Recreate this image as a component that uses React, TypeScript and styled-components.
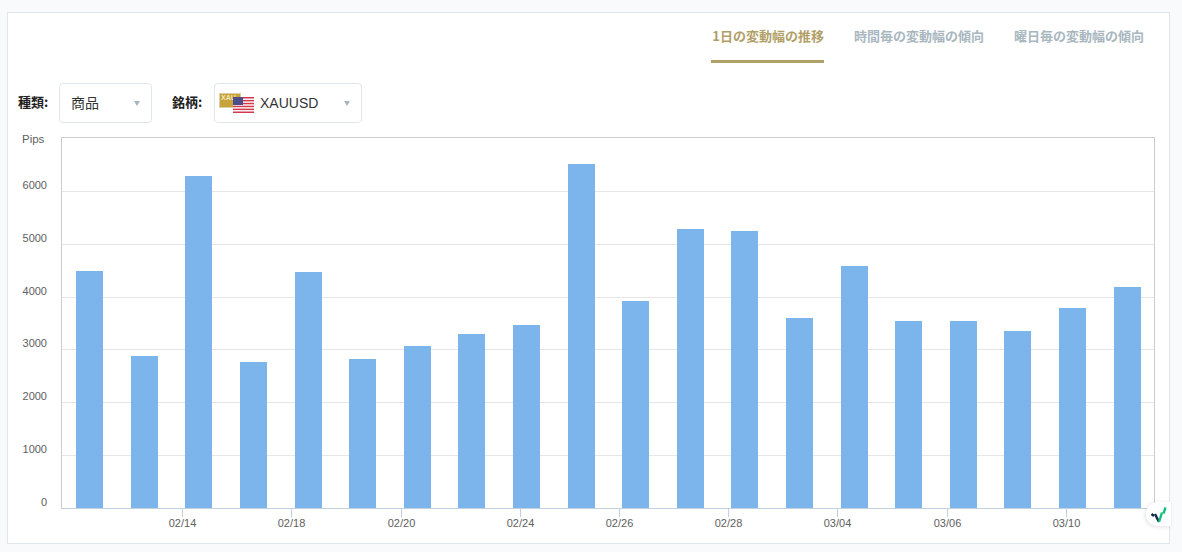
import React from "react";
import styled, { createGlobalStyle } from "styled-components";

const GlobalStyle = createGlobalStyle`
  html, body {
    margin: 0;
    padding: 0;
    background: #f9fafc;
    font-family: "Liberation Sans", "Noto Sans CJK JP", sans-serif;
  }
`;

const Page = styled.div`
  width: 1182px;
  height: 552px;
  padding: 12px 12px 8px 7px;
  box-sizing: border-box;
  overflow: hidden;
`;

const Card = styled.div`
  position: relative;
  height: 532px;
  box-sizing: border-box;
  background: #fff;
  border: 1px solid #dfe7ec;
`;

const Tabs = styled.div`
  display: flex;
  justify-content: flex-end;
  gap: 30px;
  height: 50px;
  padding-right: 25px;
`;

const Tab = styled.div<{ $active?: boolean }>`
  height: 50px;
  box-sizing: border-box;
  padding: 13px 0 0 ${(props) => (props.$active ? "1px" : "0")};
  font-size: 13px;
  line-height: 19px;
  font-weight: 700;
  font-family: "Noto Sans CJK JP", sans-serif;
  color: ${(props) => (props.$active ? "#b19f68" : "#a9b7c0")};
  border-bottom: 3px solid
    ${(props) => (props.$active ? "#b19f68" : "transparent")};
`;

const Filters = styled.div`
  display: flex;
  align-items: center;
  height: 40px;
  margin-top: 20px;
  padding-left: 10px;
`;

const FilterLabel = styled.div<{ $width: number }>`
  width: ${(props) => props.$width}px;
  font-size: 13px;
  font-weight: 700;
  color: #222;
  font-family: "Noto Sans CJK JP", sans-serif;
  margin-right: 10px;
  position: relative;
  top: -2px;
  white-space: nowrap;
`;

const Select = styled.div<{ $width: number }>`
  display: flex;
  align-items: center;
  width: ${(props) => props.$width}px;
  height: 40px;
  box-sizing: border-box;
  margin-right: 20px;
  padding: 0 11px;
  background: #fff;
  border: 1px solid #dfe7ec;
  border-radius: 4px;
  font-size: 14px;
  color: #333;
  font-family: "Liberation Sans", "Noto Sans CJK JP", sans-serif;
`;

const SelectValue = styled.span<{ $lift?: boolean }>`
  flex: 1;
  position: relative;
  top: ${(props) => (props.$lift ? "-1px" : "0")};
`;

const Caret = styled.span`
  width: 0;
  height: 0;
  border-left: 3.5px solid transparent;
  border-right: 3.5px solid transparent;
  border-top: 5px solid #a9b5bd;
`;

const FlagIcon = styled.svg`
  display: block;
  flex: none;
  margin: 0 5px 0 -7px;
`;

const ChartSvg = styled.svg`
  display: block;
  margin-top: 2px;
  font-family: "Liberation Sans", sans-serif;
  font-size: 11px;
  fill: #606060;
`;

const Badge = styled.div`
  position: absolute;
  right: -2px;
  top: 489px;
  width: 25px;
  height: 24px;
  display: flex;
  align-items: center;
  justify-content: center;
  background: #fff;
  border-radius: 12px 0 0 12px;
  box-shadow: -1px 1px 4px rgba(0, 0, 0, 0.12);
`;

const bars = [
  { x: 76, top: 271 },
  { x: 131, top: 356 },
  { x: 185, top: 176 },
  { x: 240, top: 362 },
  { x: 295, top: 272 },
  { x: 349, top: 359 },
  { x: 404, top: 346 },
  { x: 458, top: 334 },
  { x: 513, top: 325 },
  { x: 568, top: 164 },
  { x: 622, top: 301 },
  { x: 677, top: 229 },
  { x: 731, top: 231 },
  { x: 786, top: 318 },
  { x: 841, top: 266 },
  { x: 895, top: 321 },
  { x: 950, top: 321 },
  { x: 1004, top: 331 },
  { x: 1059, top: 308 },
  { x: 1114, top: 287 },
];
const yLabels = [
  { label: "6000", y: 191 },
  { label: "5000", y: 244 },
  { label: "4000", y: 297 },
  { label: "3000", y: 349 },
  { label: "2000", y: 402 },
  { label: "1000", y: 455 },
];
const xTicks = [
  { label: "02/14", x: 182 },
  { label: "02/18", x: 291 },
  { label: "02/20", x: 401 },
  { label: "02/24", x: 520 },
  { label: "02/26", x: 619 },
  { label: "02/28", x: 728 },
  { label: "03/04", x: 837 },
  { label: "03/06", x: 947 },
  { label: "03/10", x: 1066 },
];

// page coordinates of the chart's top-left corner
const OX = 8;
const OY = 125;

const Flags = () => (
  <FlagIcon width="36" height="21" viewBox="0 0 36 21">
    <rect x="0.5" y="0.5" width="21" height="14" fill="#c7a33c" stroke="#d8cfa8" />
    <text x="2" y="7" fontSize="7" fontWeight="700" fill="#f3e6b8" fontFamily="Liberation Sans">
      XAU
    </text>
    <rect x="14" y="4" width="21" height="16" fill="#fff" />
    {[0, 1, 2, 3, 4, 5].map((i) => (
      <rect key={i} x="14" y={4 + i * 2.9} width="21" height="1.5" fill="#cf3a4c" />
    ))}
    <rect x="14" y="4" width="10" height="8" fill="#4a4f8c" />
  </FlagIcon>
);

const Chart = () => (
  <ChartSvg width="1160" height="405" viewBox={`${OX} ${OY} 1160 405`}>
    <text x="22" y="143" fontSize="11.5">Pips</text>
    <rect x="61.5" y="137.5" width="1093" height="371" fill="none" stroke="#ccc" />
    {yLabels.map((t) => (
      <g key={t.label}>
        <line x1="62" x2="1154" y1={t.y + 0.5} y2={t.y + 0.5} stroke="#e6e6e6" />
        <text x="47" y={t.y - 2} textAnchor="end">{t.label}</text>
      </g>
    ))}
    <text x="47" y="506" textAnchor="end">0</text>
    {bars.map((bar) => (
      <rect
        key={bar.x}
        x={bar.x}
        y={bar.top}
        width="27"
        height={508 - bar.top}
        fill="#7cb5ec"
      />
    ))}
    <line x1="61" x2="1155" y1="508.5" y2="508.5" stroke="#c0d0e0" />
    {xTicks.map((t) => (
      <g key={t.label}>
        <line x1={t.x + 0.5} x2={t.x + 0.5} y1="509" y2="517" stroke="#c0d0e0" />
        <text x={t.x + 0.5} y="527" textAnchor="middle">{t.label}</text>
      </g>
    ))}
  </ChartSvg>
);

export default function App() {
  return (
    <Page>
      <GlobalStyle />
      <Card>
        <Tabs>
          <Tab $active>1日の変動幅の推移</Tab>
          <Tab>時間毎の変動幅の傾向</Tab>
          <Tab>曜日毎の変動幅の傾向</Tab>
        </Tabs>
        <Filters>
          <FilterLabel $width={31}>種類:</FilterLabel>
          <Select $width={93}>
            <SelectValue $lift>商品</SelectValue>
            <Caret />
          </Select>
          <FilterLabel $width={32}>銘柄:</FilterLabel>
          <Select $width={148}>
            <Flags />
            <SelectValue>XAUUSD</SelectValue>
            <Caret />
          </Select>
        </Filters>
        <Chart />
        <Badge>
          <svg width="17" height="17" viewBox="0 0 17 17" fill="none">
            <path d="M1.5 8L4 10M5 8l4 8" stroke="#12294b" strokeWidth="2.4" />
            <path d="M9 16l3-9.5M13.5 7.5l2-6" stroke="#13c07c" strokeWidth="2.4" />
          </svg>
        </Badge>
      </Card>
    </Page>
  );
}
